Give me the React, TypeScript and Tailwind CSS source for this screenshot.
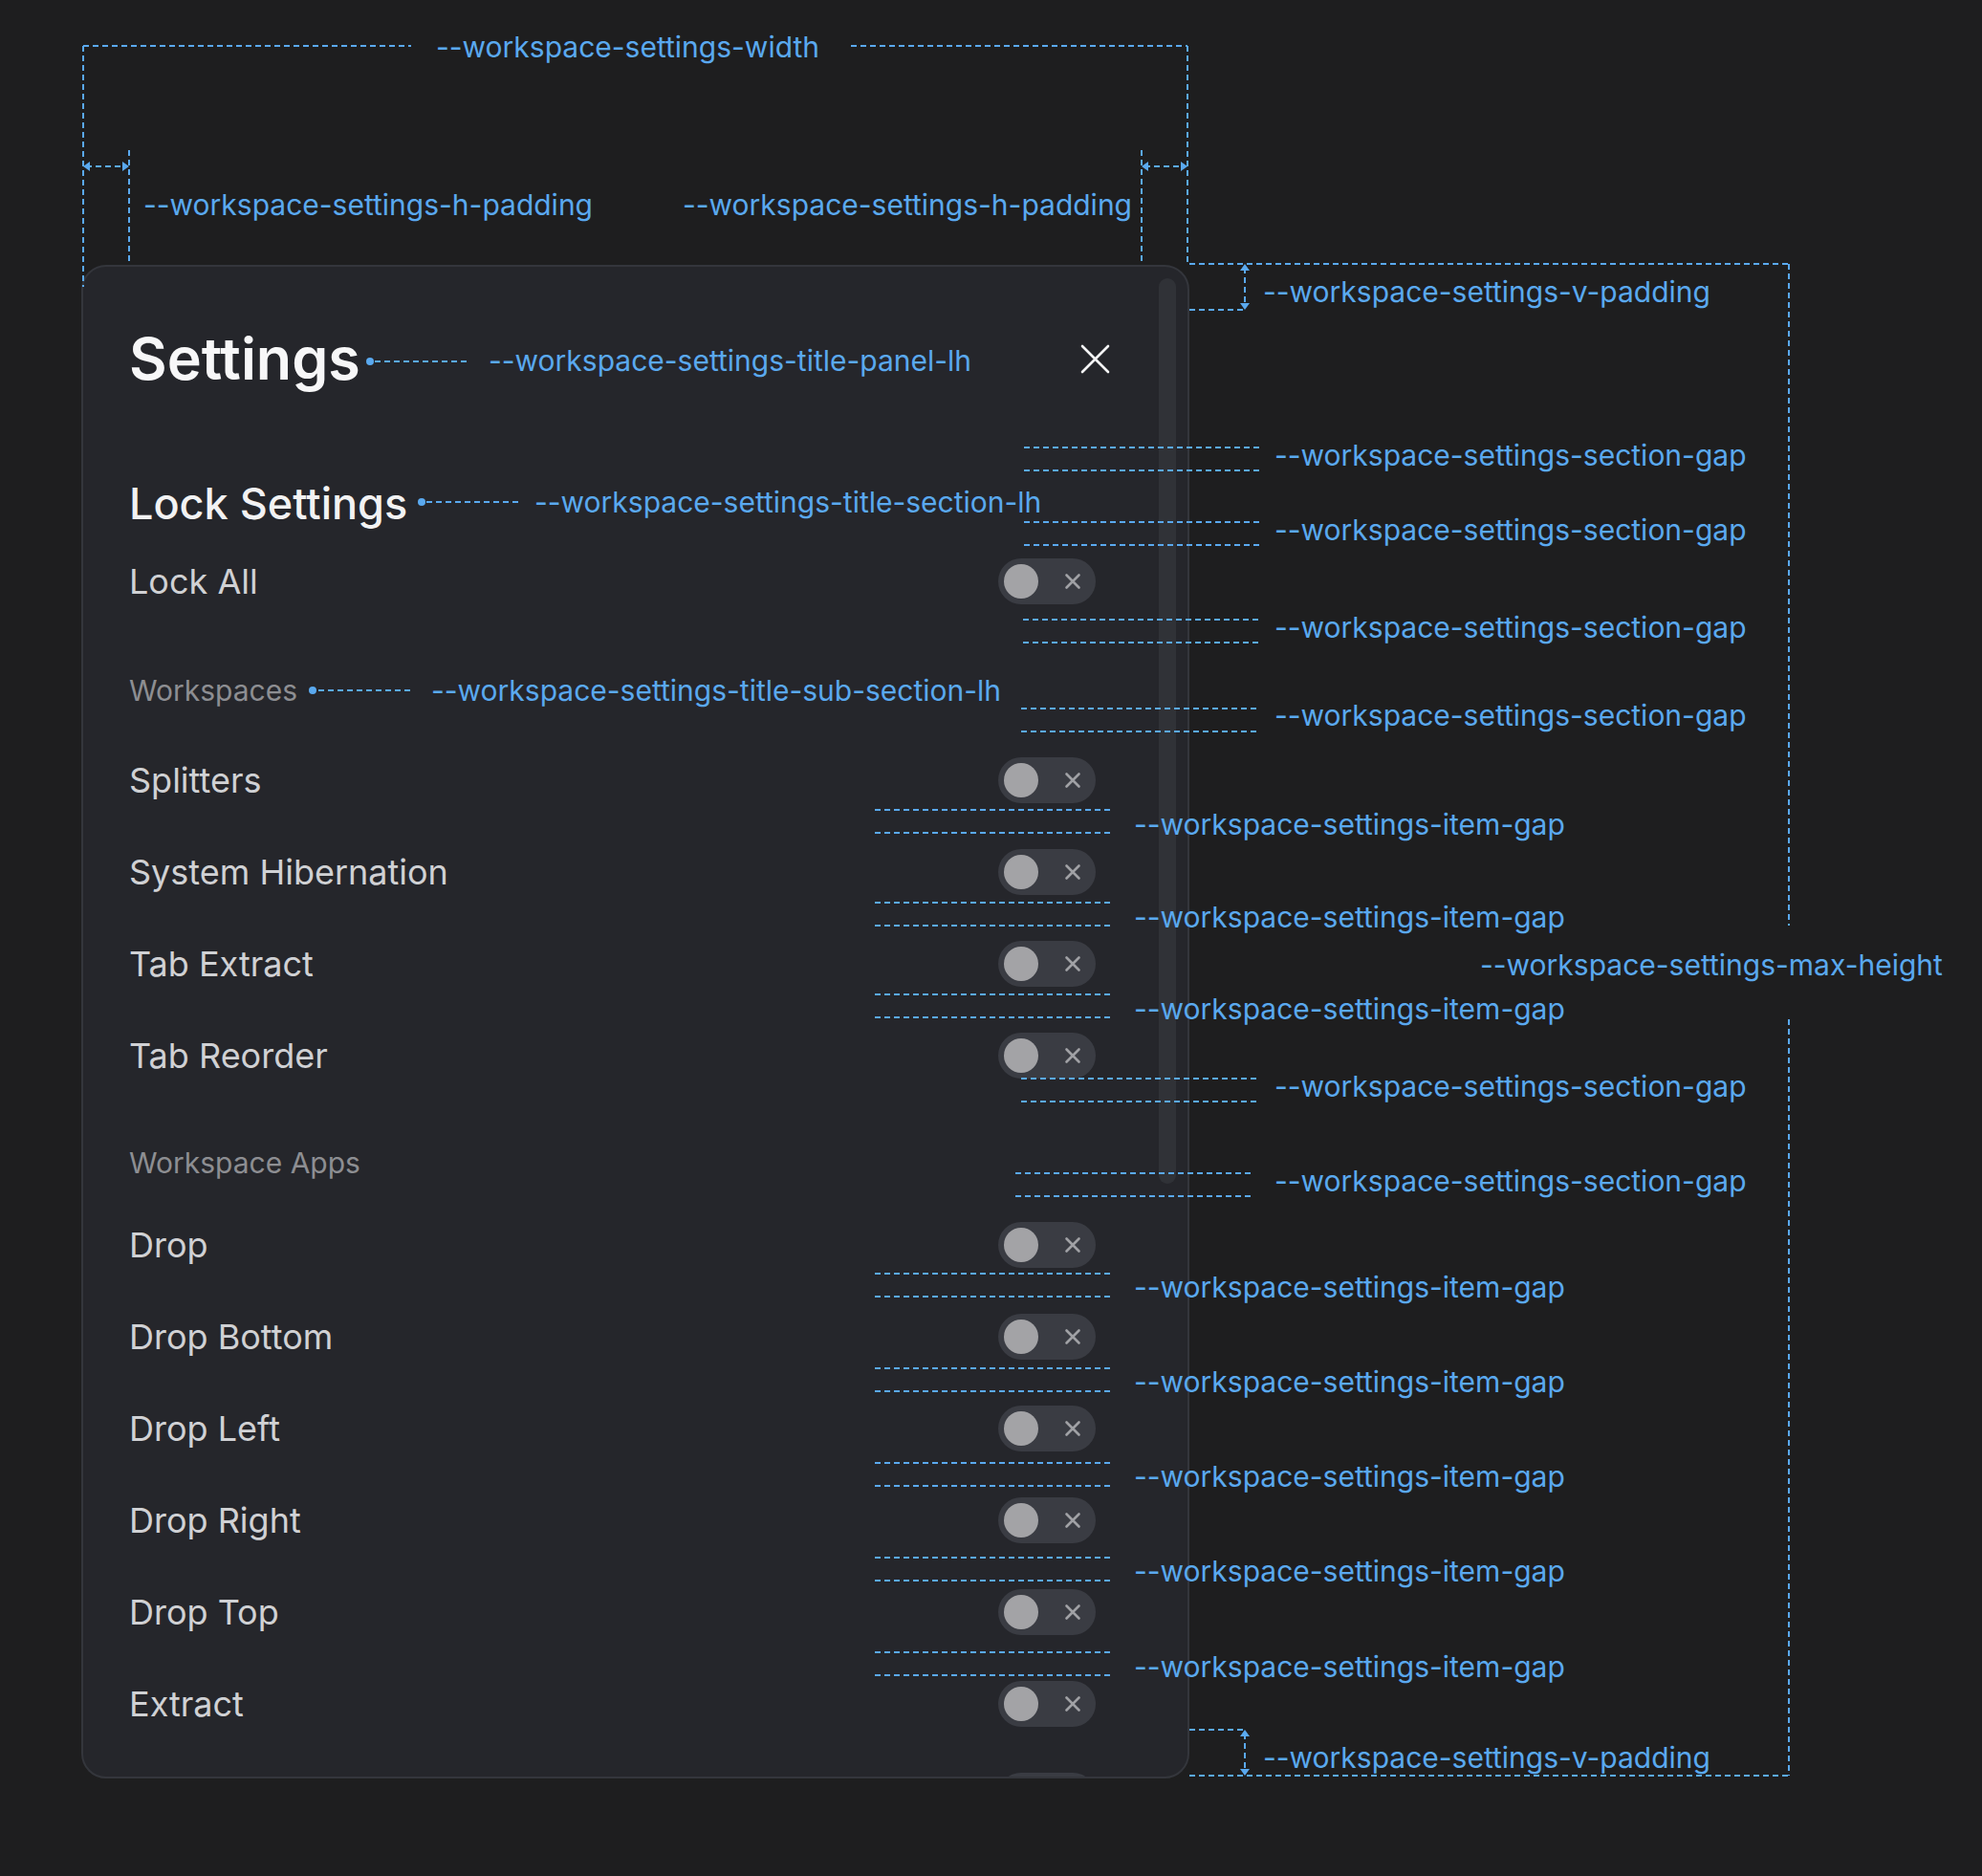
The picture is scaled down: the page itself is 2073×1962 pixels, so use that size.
import React from "react";

const BLUE = "#5aa9ef";

type Seg = [number, number, number, number];

// dimension lines of the spec overlay (page coordinates)
const hPair = (y1: number, y2: number, x1: number, x2: number): Seg[] => [
  [x1, y1, x2, y1],
  [x1, y2, x2, y2],
];

const segments: Seg[] = [
  // width
  [87, 48, 430, 48],
  [890, 48, 1242, 48],
  [87, 48, 87, 300],
  [1242, 48, 1242, 276],
  // h-padding
  [135, 157, 135, 277],
  [1194, 157, 1194, 277],
  [90, 174, 132, 174],
  [1197, 174, 1239, 174],
  // v-padding top
  [1244, 276, 1871, 276],
  [1244, 324, 1302, 324],
  [1302, 280, 1302, 320],
  // max-height
  [1871, 276, 1871, 968],
  [1871, 1066, 1871, 1857],
  // v-padding bottom
  [1244, 1809, 1302, 1809],
  [1244, 1857, 1871, 1857],
  [1302, 1813, 1302, 1853],
  // title leaders
  [392, 378, 492, 378],
  [446, 525, 546, 525],
  [333, 722, 431, 722],
  // section gaps
  ...hPair(468, 492, 1071, 1317),
  ...hPair(546, 570, 1071, 1317),
  ...hPair(648, 672, 1070, 1316),
  ...hPair(741, 765, 1068, 1314),
  ...hPair(1128, 1152, 1068, 1314),
  ...hPair(1227, 1251, 1062, 1308),
  // item gaps
  ...hPair(847, 871, 915, 1161),
  ...hPair(944, 968, 915, 1161),
  ...hPair(1040, 1064, 915, 1161),
  ...hPair(1332, 1356, 915, 1161),
  ...hPair(1431, 1455, 915, 1161),
  ...hPair(1530, 1554, 915, 1161),
  ...hPair(1629, 1653, 915, 1161),
  ...hPair(1728, 1752, 915, 1161),
];

const dots: [number, number][] = [
  [387, 378],
  [441, 525],
  [327, 722],
];

// arrowheads: [tipX, tipY, direction]
const heads: [number, number, "l" | "r" | "u" | "d"][] = [
  [87, 174, "l"],
  [135, 174, "r"],
  [1194, 174, "l"],
  [1242, 174, "r"],
  [1302, 276, "u"],
  [1302, 324, "d"],
  [1302, 1809, "u"],
  [1302, 1857, "d"],
];

const headPoints = (x: number, y: number, d: string) => {
  const s = 7;
  const w = 5;
  if (d === "l") return `${x},${y} ${x + s},${y - w} ${x + s},${y + w}`;
  if (d === "r") return `${x},${y} ${x - s},${y - w} ${x - s},${y + w}`;
  if (d === "u") return `${x},${y} ${x - w},${y + s} ${x + w},${y + s}`;
  return `${x},${y} ${x - w},${y - s} ${x + w},${y - s}`;
};

type Label = { text: string; x: number; y: number };

const labels: Label[] = [
  { text: "--workspace-settings-width", x: 456, y: 49 },
  { text: "--workspace-settings-h-padding", x: 150, y: 214 },
  { text: "--workspace-settings-h-padding", x: 714, y: 214 },
  { text: "--workspace-settings-v-padding", x: 1321, y: 305 },
  { text: "--workspace-settings-title-panel-lh", x: 511, y: 377 },
  { text: "--workspace-settings-title-section-lh", x: 559, y: 525 },
  { text: "--workspace-settings-title-sub-section-lh", x: 451, y: 722 },
  ...[476, 554, 656, 748, 1136, 1235].map((y) => ({
    text: "--workspace-settings-section-gap",
    x: 1333,
    y,
  })),
  ...[862, 959, 1055, 1346, 1445, 1544, 1643, 1743].map((y) => ({
    text: "--workspace-settings-item-gap",
    x: 1186,
    y,
  })),
  { text: "--workspace-settings-max-height", x: 1548, y: 1009 },
  { text: "--workspace-settings-v-padding", x: 1321, y: 1838 },
];

function Toggle() {
  return (
    <div className="flex h-[48px] w-[102px] shrink-0 items-center rounded-full bg-[#3a3c43] px-[6px]">
      <div className="h-[36px] w-[36px] rounded-full bg-[#a3a3a6]" />
      <svg
        className="ml-auto mr-[9px]"
        width="18"
        height="18"
        viewBox="0 0 18 18"
        fill="none"
      >
        <path
          d="M2.5 2.5L15.5 15.5M15.5 2.5L2.5 15.5"
          stroke="#a0a1a5"
          strokeWidth="2.6"
          strokeLinecap="round"
        />
      </svg>
    </div>
  );
}

function Row({ label }: { label: string }) {
  return (
    <div className="flex h-[72px] w-[1011px] items-center justify-between">
      <span className="text-[36px] leading-[72px] text-[#d0d1d4]">{label}</span>
      <Toggle />
    </div>
  );
}

function Group({ items }: { items: string[] }) {
  return (
    <div className="flex flex-col gap-[24px]">
      {items.map((i, n) => (
        <Row key={n} label={i} />
      ))}
    </div>
  );
}

export default function App() {
  return (
    <div className="relative min-h-[1962px] w-[2073px] overflow-hidden bg-[#1e1e1f] pl-[85px] pt-[277px] font-['Inter',sans-serif]">
      <div className="relative h-[1583px] w-[1159px] overflow-hidden rounded-[26px] border-2 border-[#34363c] bg-[#25262b] pl-[48px] pt-[46px]">
        <div className="flex h-[100px] w-[1059px] items-center justify-between">
          <h1 className="text-[61px] font-semibold leading-[100px] text-[#f7f7f8]">
            Settings
          </h1>
          <button className="mr-[33px] flex h-[32px] w-[32px] items-center justify-center">
            <svg width="31" height="31" viewBox="0 0 31 31" fill="none">
              <path
                d="M2 2L29 29M29 2L2 29"
                stroke="#f4f4f5"
                strokeWidth="2.6"
                strokeLinecap="round"
              />
            </svg>
          </button>
        </div>

        <h2 className="mt-[75px] text-[45px] font-medium leading-[54px] text-[#f2f2f3]">
          Lock Settings
        </h2>
        <div className="mt-[18px]">
          <Row label="Lock All" />
        </div>

        <h3 className="mt-[60px] text-[30px] leading-[36px] text-[#8d8e92]">
          Workspaces
        </h3>
        <div className="mt-[40px]">
          <Group
            items={["Splitters", "System Hibernation", "Tab Extract", "Tab Reorder"]}
          />
        </div>

        <h3 className="mt-[58px] text-[30px] leading-[36px] text-[#8d8e92]">
          Workspace Apps
        </h3>
        <div className="mt-[32px]">
          <Group
            items={["Drop", "Drop Bottom", "Drop Left", "Drop Right", "Drop Top", "Extract", ""]}
          />
        </div>

        {/* scrollbar thumb */}
        <div className="absolute right-[12px] top-[12px] h-[947px] w-[18px] rounded-full bg-[#303237]" />
      </div>

      <svg
        className="pointer-events-none absolute left-0 top-0"
        width="2073"
        height="1962"
        viewBox="0 0 2073 1962"
        fill="none"
      >
        {segments.map(([x1, y1, x2, y2], i) => (
          <line
            key={i}
            x1={x1}
            y1={y1}
            x2={x2}
            y2={y2}
            stroke={BLUE}
            strokeWidth="2"
            strokeDasharray="6 4"
          />
        ))}
        {dots.map(([cx, cy], i) => (
          <circle key={i} cx={cx} cy={cy} r="4" fill={BLUE} />
        ))}
        {heads.map(([x, y, d], i) => (
          <polygon key={i} points={headPoints(x, y, d)} fill={BLUE} />
        ))}
      </svg>

      {labels.map((l, i) => (
        <div
          key={i}
          className="pointer-events-none absolute whitespace-nowrap text-[30px] leading-[36px] text-[#5aa9ef]"
          style={{ left: l.x, top: l.y - 18 }}
        >
          {l.text}
        </div>
      ))}
    </div>
  );
}
